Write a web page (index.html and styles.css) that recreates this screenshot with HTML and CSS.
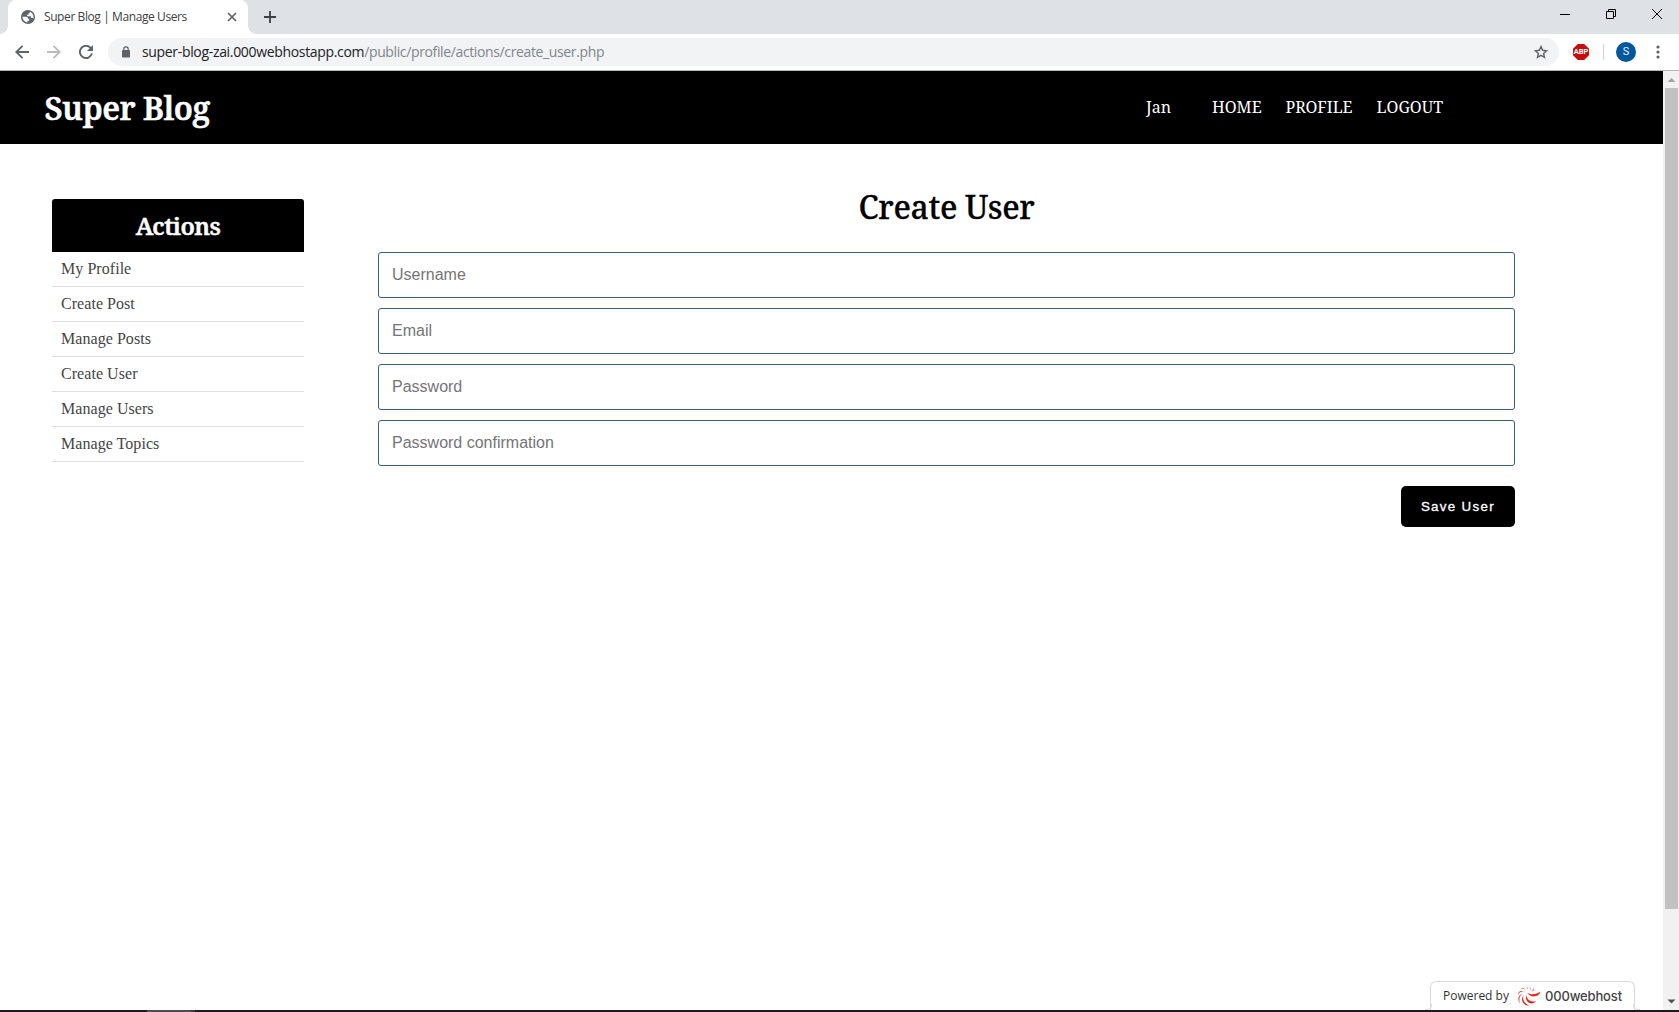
FILE: index.html
```html
<!DOCTYPE html>
<html lang="en">
<head>
<meta charset="utf-8">
<title>Super Blog | Manage Users</title>
<link rel="stylesheet" href="styles.css">
</head>
<body>
<div class="tabstrip">
  <div class="tab">
    <svg class="globe" width="14" height="14" viewBox="0 0 14 14"><circle cx="7" cy="7" r="7" fill="#5f6368"/><path d="M1.500 6.800h3.300c1.400 0 2.200.8 2.200 2h1.200v2H6.500v1.600C3.800 12.200 1.500 9.800 1.500 6.800z" fill="#fff"/><path d="M8.700 1.700c2.200.7 3.800 2.700 3.800 5.200 0 .6-.1 1.100-.2 1.600-.4-.5-.9-.8-1.600-.8H9.900V6.200H6V4.700h1.500V3.200h1.200z" fill="#fff"/></svg>
    <span class="tab-title">Super Blog | Manage Users</span>
    <svg class="tab-close" width="10" height="10" viewBox="0 0 10 10"><path d="m1 1 8 8M9 1 1 9" stroke="#5f6368" stroke-width="1.7"/></svg>
  </div>
  <svg class="new-tab" width="12" height="12" viewBox="0 0 12 12"><path d="M6 0v12M0 6h12" stroke="#3c4043" stroke-width="1.8"/></svg>
  <div class="window-buttons">
    <svg width="10" height="10" viewBox="0 0 10 10"><path d="M0 5.500h10" stroke="#000"/></svg>
    <svg width="10" height="10" viewBox="0 0 10 10"><path d="M.5 2.500h7v7h-7zM2.500 2.500v-2h7v7h-2" fill="none" stroke="#000"/></svg>
    <svg width="10" height="10" viewBox="0 0 10 10"><path d="m0 0 10 10M10 0 0 10" stroke="#000"/></svg>
  </div>
</div>
<div class="toolbar">
  <div class="nav-buttons">
    <svg width="14" height="14" viewBox="0 0 14 14"><path d="M14 7H1.500M7.500.8 1.300 7l6.200 6.200" fill="none" stroke="#5f6368" stroke-width="1.800"/></svg>
    <svg width="14" height="14" viewBox="0 0 14 14"><path d="M0 7h12.500M6.500.8 12.700 7l-6.200 6.200" fill="none" stroke="#babcbe" stroke-width="1.800"/></svg>
    <svg width="14" height="14" viewBox="0 0 14 14"><path d="M11.700 3A6.100 6.100 0 1 0 12.900 8.600" fill="none" stroke="#5f6368" stroke-width="1.900"/><path d="M14 0v6.100H7.900z" fill="#5f6368"/></svg>
  </div>
  <div class="omnibox">
    <svg class="lock" width="8" height="12" viewBox="0 0 8 12"><rect y="4" width="8" height="7.500" rx=".8" fill="#5f6368"/><path d="M1.800 4.500V3a2.200 2.200 0 0 1 4.400 0v1.500" fill="none" stroke="#5f6368" stroke-width="1.200"/></svg>
    <div class="url"><span class="host">super-blog-zai.000webhostapp.com</span><span class="path">/public/profile/actions/create_user.php</span></div>
    <svg class="star" width="14" height="14" viewBox="0 0 14 14"><path d="m7 1.600 1.600 3.700 4 .4-3 2.700.9 4L7 10.300l-3.500 2.100.9-4-3-2.700 4-.4z" fill="none" stroke="#5f6368" stroke-width="1.400"/></svg>
  </div>
  <div class="extension">ABP</div>
  <div class="divider"></div>
  <div class="avatar">S</div>
  <svg class="menu" width="4" height="14" viewBox="0 0 4 14"><g fill="#5f6368"><circle cx="2" cy="2" r="1.600"/><circle cx="2" cy="7" r="1.600"/><circle cx="2" cy="12" r="1.600"/></g></svg>
</div>
<div class="viewport">
  <div class="page">
    <header class="site-header">
      <h1 class="brand">Super Blog</h1>
      <nav class="site-nav"><a class="user">Jan</a><a class="home">HOME</a><a class="profile">PROFILE</a><a class="logout">LOGOUT</a></nav>
    </header>
    <div class="content">
      <aside class="sidebar">
        <h2 class="sidebar-title">Actions</h2>
        <ul class="actions"><li>My Profile</li><li>Create Post</li><li>Manage Posts</li><li>Create User</li><li>Manage Users</li><li>Manage Topics</li></ul>
      </aside>
      <main class="form-area">
        <h2 class="form-title">Create User</h2>
        <form class="form">
          <input class="field" type="text" placeholder="Username">
          <input class="field" type="text" placeholder="Email">
          <input class="field" type="password" placeholder="Password">
          <input class="field" type="password" placeholder="Password confirmation">
          <button class="save" type="button">Save User</button>
        </form>
      </main>
    </div>
    <div class="badge">
      <span class="powered">Powered by</span>
      <svg class="host-logo" width="24" height="20" viewBox="0 0 24 20"><g fill="#dc2b1f"><path d="M10 6.200C13 9.300 19 9 23.500 5.600 22.500 11 13.500 13 10 6.200z"/><path d="M9.400 8.700c.3 4.700 4.500 8 9.700 6.500C14.500 20 7.200 16.500 9.400 8.700z"/><path d="M6.800 9C4.800 13 7 17.500 12.600 19.600 6 20 2.800 14 6.800 9z"/></g><g fill="#e2574d"><path d="M5.500 7.600C2.800 9.700 1.800 12.800 2.700 17.500.3 13.500.9 9.300 5.500 7.600z"/><path d="M6.500 5.400C4.200 5.200 2.400 6.300.7 8.800 1.400 5.400 4 3.900 6.500 5.400z"/><path d="M8.300 4.200C7 2.700 5.500 2.400 3.600 3.200 5.300 1.300 7.600 1.900 8.300 4.200z"/><path d="M10.800 3.800c-.2-1.700-1-2.500-2.500-3 2.100.1 3.200 1.300 2.500 3z"/><path d="M12.500 4.400c1-1.500.8-2.600-.2-3.900 1.800 1.100 1.800 2.900.2 3.900z"/><path d="M14.300 5.300c1.700-.8 2.300-1.700 2.200-3.500 1.200 1.900.2 3.500-2.200 3.500z"/></g></svg>
      <span class="hostname">000webhost</span>
    </div>
  </div>
  <div class="scrollbar">
    <svg width="16" height="17" viewBox="0 0 16 17"><path d="m4.500 11 4-4 4 4z" fill="#a3a3a3"/></svg>
    <div class="thumb"></div>
    <svg width="16" height="17" viewBox="0 0 16 17"><path d="m4.500 6.500 4 4 4-4z" fill="#505050"/></svg>
  </div>
</div>
<div class="taskbar"><div class="task-active"></div><div class="task-edge"></div></div>
</body>
</html>
```
FILE: styles.css
```css
* { box-sizing: border-box; }
body { margin: 0; width: 1679px; height: 1012px; overflow: hidden; display: flex; flex-direction: column; background: #fff; font-family: "Liberation Sans", sans-serif; }
svg { display: block; flex: none; }
h1, h2, ul { margin: 0; padding: 0; }

.tabstrip { height: 34px; display: flex; background: #dee1e6; padding-left: 8px; flex: none; }
.tab { width: 240px; height: 34px; background: #fff; border-radius: 8px 8px 0 0; display: flex; align-items: center; padding: 0 11px 0 13px; position: relative; }
.tab::before, .tab::after { content: ""; position: absolute; bottom: 0; width: 8px; height: 8px; }
.tab::before { left: -8px; background: radial-gradient(circle at 0 0, transparent 7.5px, #fff 8px); }
.tab::after { right: -8px; background: radial-gradient(circle at 100% 0, transparent 7.5px, #fff 8px); }
.tab-title { margin-left: 9px; font: 12px/16px "Open Sans", sans-serif; letter-spacing: -0.41px; color: #3c4043; white-space: nowrap; }
.tab-close { margin-left: auto; }
.new-tab { margin: 11px 0 0 16px; }
.window-buttons { display: flex; gap: 36px; margin: 9px 17px 0 auto; }

.toolbar { height: 37px; border-bottom: 1px solid #b3b4b5; display: flex; align-items: center; flex: none; background: #fff; }
.nav-buttons { display: flex; gap: 18px; padding-left: 15px; width: 108px; flex: none; }
.omnibox { width: 1451px; height: 28px; border-radius: 14px; background: #f1f3f4; display: flex; align-items: center; padding: 0 11px 0 14px; }
.url { margin-left: 12px; font: 14px/20px "Open Sans", sans-serif; white-space: nowrap; }
.host { color: #202124; letter-spacing: -0.33px; }
.path { color: #80868b; letter-spacing: -0.37px; }
.star { margin-left: auto; }
.extension { width: 16px; height: 16px; margin-left: 14px; background: #c70d0a; clip-path: polygon(30% 0, 70% 0, 100% 30%, 100% 70%, 70% 100%, 30% 100%, 0 70%, 0 30%); color: #fff; font: bold 7.5px/16px Roboto, sans-serif; text-align: center; }
.divider { width: 1px; height: 16px; margin-left: 14px; background: #cfd1d4; }
.avatar { width: 20px; height: 20px; margin-left: 12px; border-radius: 50%; background: #01579b; color: #e8f0f7; font: 11px/20px Roboto, sans-serif; text-align: center; }
.menu { margin-left: 20px; }

.viewport { height: 939px; display: flex; flex: none; }
.page { width: 1663px; display: flex; flex-direction: column; position: relative; }
.site-header { height: 73px; background: #000; display: flex; justify-content: space-between; padding: 0 220px 0 44px; color: #fff; font-family: "Noto Serif", serif; }
.brand { font-size: 32px; line-height: 44px; font-weight: 600; margin-top: 15px; padding-left: 0.5px; letter-spacing: -0.55px; -webkit-text-stroke: 0.5px #fff; }
.site-nav { display: flex; font-size: 16px; line-height: 22px; margin-top: 25px; }
.user { margin-right: 41px; }
.home, .profile { margin-right: 24px; }

.content { display: flex; }
.sidebar { width: 252px; margin: 55px 0 0 52px; }
.sidebar-title { height: 53px; padding-top: 10px; background: #000; border-radius: 3px 3px 0 0; color: #fff; font: 600 24px/33px "Noto Serif", serif; letter-spacing: -0.55px; text-align: center; -webkit-text-stroke: 0.5px #fff; }
.actions { list-style: none; font: 16px/18px "Liberation Serif", serif; letter-spacing: 0.05px; color: #444; }
.actions li { height: 35px; padding: 8px 9px; border-bottom: 1px solid #e0e0e0; }
.form-area { width: 1137px; margin-left: 74px; padding-top: 41px; }
.form-title { height: 67px; font: 500 32px/44px "Noto Serif", serif; text-align: center; color: #000; letter-spacing: -0.35px; -webkit-text-stroke: 0.3px #000; }
.form { display: flex; flex-direction: column; gap: 10px; }
.field { height: 46px; padding: 0 13px; border: 1px solid #3a5f6f; border-radius: 3px; font: 16px "Liberation Sans", sans-serif; color: #444; background: #fff; }
.field::placeholder { color: #757575; opacity: 1; }
.save { align-self: flex-end; width: 114px; height: 41px; margin-top: 10px; padding: 0; border: 0; border-radius: 5px; background: #000; color: #fff; font: 13.333px "Liberation Sans", sans-serif; letter-spacing: 1.33px; -webkit-text-stroke: 0.3px #fff; }

.badge { position: absolute; left: 1430px; bottom: 0; width: 205px; height: 29px; border: 1px solid #dadada; border-bottom: 0; border-radius: 6px 6px 0 0; background: #fff; display: flex; align-items: center; padding-left: 12px; white-space: nowrap; color: #333; }
.badge::before, .badge::after { content: ""; position: absolute; bottom: 0; width: 6px; height: 5px; border-bottom: 1px solid #dadada; }
.badge::before { left: -6px; border-right: 1px solid #dadada; border-bottom-right-radius: 5px; }
.badge::after { right: -6px; border-left: 1px solid #dadada; border-bottom-left-radius: 5px; }
.powered { font: 12px/16px "Open Sans", sans-serif; }
.host-logo { margin-left: 8px; }
.hostname { margin-left: 4px; font: 500 13px/16px Inter, sans-serif; letter-spacing: -0.15px; color: #444; }

.scrollbar { width: 16px; background: #f1f1f1; display: flex; flex-direction: column; }
.thumb { width: 13px; height: 821px; margin-left: 2px; background: #c1c1c1; }
.scrollbar svg:last-child { margin-top: auto; }
.taskbar { height: 2px; background: #1c1a1c; display: flex; padding-left: 147px; }
.task-active { width: 44px; background: #4f4d4f; }
.task-edge { width: 4px; background: #3c3a3c; }
```
